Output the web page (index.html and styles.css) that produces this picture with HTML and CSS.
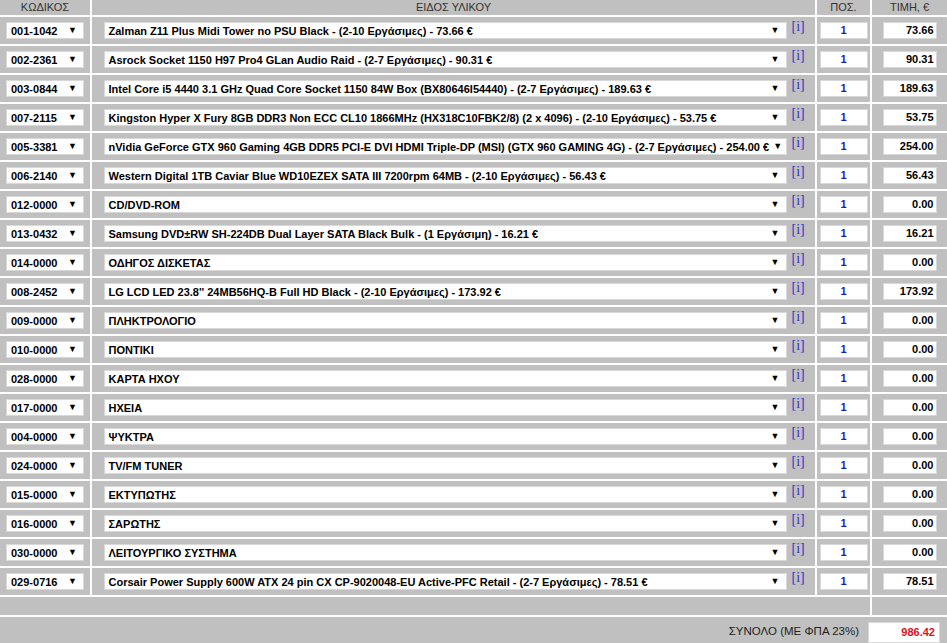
FILE: index.html
```html
<!DOCTYPE html>
<html lang="el">
<head>
<meta charset="utf-8">
<title>Παραγγελία</title>
<link rel="stylesheet" href="styles.css">
</head>
<body>
<div class="grid">
  <div class="hd">ΚΩΔΙΚΟΣ</div>
  <div class="hd">ΕΙΔΟΣ ΥΛΙΚΟΥ</div>
  <div class="hd">ΠΟΣ.</div>
  <div class="hd">ΤΙΜΗ, €</div>

  <div class="c"><div class="sel code"><span>001-1042</span><i class="arr">▼</i></div></div>
  <div class="c"><div class="sel prod"><span>Zalman Z11 Plus Midi Tower no PSU Black - (2-10 Εργάσιμες) - 73.66 €</span><i class="arr">▼</i></div><a class="info">[i]</a></div>
  <div class="c"><div class="box qty">1</div></div>
  <div class="c"><div class="box price">73.66</div></div>

  <div class="c"><div class="sel code"><span>002-2361</span><i class="arr">▼</i></div></div>
  <div class="c"><div class="sel prod"><span>Asrock Socket 1150 H97 Pro4 GLan Audio Raid - (2-7 Εργάσιμες) - 90.31 €</span><i class="arr">▼</i></div><a class="info">[i]</a></div>
  <div class="c"><div class="box qty">1</div></div>
  <div class="c"><div class="box price">90.31</div></div>

  <div class="c"><div class="sel code"><span>003-0844</span><i class="arr">▼</i></div></div>
  <div class="c"><div class="sel prod"><span>Intel Core i5 4440 3.1 GHz Quad Core Socket 1150 84W Box (BX80646I54440) - (2-7 Εργάσιμες) - 189.63 €</span><i class="arr">▼</i></div><a class="info">[i]</a></div>
  <div class="c"><div class="box qty">1</div></div>
  <div class="c"><div class="box price">189.63</div></div>

  <div class="c"><div class="sel code"><span>007-2115</span><i class="arr">▼</i></div></div>
  <div class="c"><div class="sel prod"><span>Kingston Hyper X Fury 8GB DDR3 Non ECC CL10 1866MHz (HX318C10FBK2/8) (2 x 4096) - (2-10 Εργάσιμες) - 53.75 €</span><i class="arr">▼</i></div><a class="info">[i]</a></div>
  <div class="c"><div class="box qty">1</div></div>
  <div class="c"><div class="box price">53.75</div></div>

  <div class="c"><div class="sel code"><span>005-3381</span><i class="arr">▼</i></div></div>
  <div class="c"><div class="sel prod"><span>nVidia GeForce GTX 960 Gaming 4GB DDR5 PCI-E DVI HDMI Triple-DP (MSI) (GTX 960 GAMING 4G) - (2-7 Εργάσιμες) - 254.00 €</span><i class="arr">▼</i></div><a class="info">[i]</a></div>
  <div class="c"><div class="box qty">1</div></div>
  <div class="c"><div class="box price">254.00</div></div>

  <div class="c"><div class="sel code"><span>006-2140</span><i class="arr">▼</i></div></div>
  <div class="c"><div class="sel prod"><span>Western Digital 1TB Caviar Blue WD10EZEX SATA III 7200rpm 64MB - (2-10 Εργάσιμες) - 56.43 €</span><i class="arr">▼</i></div><a class="info">[i]</a></div>
  <div class="c"><div class="box qty">1</div></div>
  <div class="c"><div class="box price">56.43</div></div>

  <div class="c"><div class="sel code"><span>012-0000</span><i class="arr">▼</i></div></div>
  <div class="c"><div class="sel prod"><span>CD/DVD-ROM</span><i class="arr">▼</i></div><a class="info">[i]</a></div>
  <div class="c"><div class="box qty">1</div></div>
  <div class="c"><div class="box price">0.00</div></div>

  <div class="c"><div class="sel code"><span>013-0432</span><i class="arr">▼</i></div></div>
  <div class="c"><div class="sel prod"><span>Samsung DVD±RW SH-224DB Dual Layer SATA Black Bulk - (1 Εργάσιμη) - 16.21 €</span><i class="arr">▼</i></div><a class="info">[i]</a></div>
  <div class="c"><div class="box qty">1</div></div>
  <div class="c"><div class="box price">16.21</div></div>

  <div class="c"><div class="sel code"><span>014-0000</span><i class="arr">▼</i></div></div>
  <div class="c"><div class="sel prod"><span>ΟΔΗΓΟΣ ΔΙΣΚΕΤΑΣ</span><i class="arr">▼</i></div><a class="info">[i]</a></div>
  <div class="c"><div class="box qty">1</div></div>
  <div class="c"><div class="box price">0.00</div></div>

  <div class="c"><div class="sel code"><span>008-2452</span><i class="arr">▼</i></div></div>
  <div class="c"><div class="sel prod"><span>LG LCD LED 23.8'' 24MB56HQ-B Full HD Black - (2-10 Εργάσιμες) - 173.92 €</span><i class="arr">▼</i></div><a class="info">[i]</a></div>
  <div class="c"><div class="box qty">1</div></div>
  <div class="c"><div class="box price">173.92</div></div>

  <div class="c"><div class="sel code"><span>009-0000</span><i class="arr">▼</i></div></div>
  <div class="c"><div class="sel prod"><span>ΠΛΗΚΤΡΟΛΟΓΙΟ</span><i class="arr">▼</i></div><a class="info">[i]</a></div>
  <div class="c"><div class="box qty">1</div></div>
  <div class="c"><div class="box price">0.00</div></div>

  <div class="c"><div class="sel code"><span>010-0000</span><i class="arr">▼</i></div></div>
  <div class="c"><div class="sel prod"><span>ΠΟΝΤΙΚΙ</span><i class="arr">▼</i></div><a class="info">[i]</a></div>
  <div class="c"><div class="box qty">1</div></div>
  <div class="c"><div class="box price">0.00</div></div>

  <div class="c"><div class="sel code"><span>028-0000</span><i class="arr">▼</i></div></div>
  <div class="c"><div class="sel prod"><span>ΚΑΡΤΑ ΗΧΟΥ</span><i class="arr">▼</i></div><a class="info">[i]</a></div>
  <div class="c"><div class="box qty">1</div></div>
  <div class="c"><div class="box price">0.00</div></div>

  <div class="c"><div class="sel code"><span>017-0000</span><i class="arr">▼</i></div></div>
  <div class="c"><div class="sel prod"><span>ΗΧΕΙΑ</span><i class="arr">▼</i></div><a class="info">[i]</a></div>
  <div class="c"><div class="box qty">1</div></div>
  <div class="c"><div class="box price">0.00</div></div>

  <div class="c"><div class="sel code"><span>004-0000</span><i class="arr">▼</i></div></div>
  <div class="c"><div class="sel prod"><span>ΨΥΚΤΡΑ</span><i class="arr">▼</i></div><a class="info">[i]</a></div>
  <div class="c"><div class="box qty">1</div></div>
  <div class="c"><div class="box price">0.00</div></div>

  <div class="c"><div class="sel code"><span>024-0000</span><i class="arr">▼</i></div></div>
  <div class="c"><div class="sel prod"><span>TV/FM TUNER</span><i class="arr">▼</i></div><a class="info">[i]</a></div>
  <div class="c"><div class="box qty">1</div></div>
  <div class="c"><div class="box price">0.00</div></div>

  <div class="c"><div class="sel code"><span>015-0000</span><i class="arr">▼</i></div></div>
  <div class="c"><div class="sel prod"><span>ΕΚΤΥΠΩΤΗΣ</span><i class="arr">▼</i></div><a class="info">[i]</a></div>
  <div class="c"><div class="box qty">1</div></div>
  <div class="c"><div class="box price">0.00</div></div>

  <div class="c"><div class="sel code"><span>016-0000</span><i class="arr">▼</i></div></div>
  <div class="c"><div class="sel prod"><span>ΣΑΡΩΤΗΣ</span><i class="arr">▼</i></div><a class="info">[i]</a></div>
  <div class="c"><div class="box qty">1</div></div>
  <div class="c"><div class="box price">0.00</div></div>

  <div class="c"><div class="sel code"><span>030-0000</span><i class="arr">▼</i></div></div>
  <div class="c"><div class="sel prod"><span>ΛΕΙΤΟΥΡΓΙΚΟ ΣΥΣΤΗΜΑ</span><i class="arr">▼</i></div><a class="info">[i]</a></div>
  <div class="c"><div class="box qty">1</div></div>
  <div class="c"><div class="box price">0.00</div></div>

  <div class="c"><div class="sel code"><span>029-0716</span><i class="arr">▼</i></div></div>
  <div class="c"><div class="sel prod"><span>Corsair Power Supply 600W ATX 24 pin CX CP-9020048-EU Active-PFC Retail - (2-7 Εργάσιμες) - 78.51 €</span><i class="arr">▼</i></div><a class="info">[i]</a></div>
  <div class="c"><div class="box qty">1</div></div>
  <div class="c"><div class="box price">78.51</div></div>

  <div class="blank span3"></div>
  <div class="blank"></div>

  <div class="total">
    <span class="total-label">ΣΥΝΟΛΟ (ΜΕ ΦΠΑ 23%)</span>
    <div class="box total-box">986.42</div>
  </div>
</div>
</body>
</html>
```

FILE: styles.css
```css
html, body {
  margin: 0;
  padding: 0;
  background: #ffffff;
}

body {
  font-family: "Liberation Sans", Arial, sans-serif;
  font-size: 11px;
  color: #000;
}

.grid {
  display: grid;
  grid-template-columns: 90px 723px 53px 75px;
  grid-template-rows: 15px repeat(20, 27px) 18px 26px;
  gap: 2px;
  width: 947px;
  background: #ffffff;
}

.hd {
  background: #c0c0c0;
  color: #333333;
  text-align: center;
  line-height: 15px;
  font-size: 11px;
}

.c {
  background: #c0c0c0;
  display: flex;
  align-items: center;
  justify-content: center;
}

.sel {
  box-sizing: border-box;
  height: 17px;
  background: #ffffff;
  border: 1px solid #d8d8d8;
  display: flex;
  align-items: center;
  justify-content: space-between;
  font-weight: bold;
  padding: 0 6px 0 4px;
  white-space: nowrap;
  overflow: hidden;
}

.code {
  width: 78px;
}

.prod {
  width: 683px;
}

.arr {
  font-style: normal;
  font-size: 9px;
  line-height: 1;
  margin-left: 4px;
}

.info {
  align-self: flex-start;
  margin-top: 3px;
  margin-left: 5px;
  font-family: "Liberation Serif", "Times New Roman", serif;
  font-size: 14px;
  line-height: 14px;
  color: #3434c8;
  cursor: pointer;
  width: 12px;
}

.box {
  box-sizing: border-box;
  height: 17px;
  line-height: 15px;
  background: #ffffff;
  border: 1px solid #d8d8d8;
  font-weight: bold;
}

.qty {
  width: 48px;
  text-align: center;
  color: #1a1acc;
}

.price {
  width: 54px;
  text-align: right;
  padding-right: 2px;
}

.blank {
  background: #c0c0c0;
}

.span3 {
  grid-column: 1 / span 3;
}

.total {
  grid-column: 1 / span 4;
  background: #c0c0c0;
  display: flex;
  align-items: flex-start;
  justify-content: flex-end;
  padding: 5px 7px 0 0;
}

.total-label {
  font-size: 11.5px;
  color: #222;
  line-height: 19px;
  margin-right: 9px;
}

.total-box {
  width: 72px;
  height: 21px;
  line-height: 19px;
  text-align: right;
  color: #e01020;
  padding-right: 4px;
}
```
